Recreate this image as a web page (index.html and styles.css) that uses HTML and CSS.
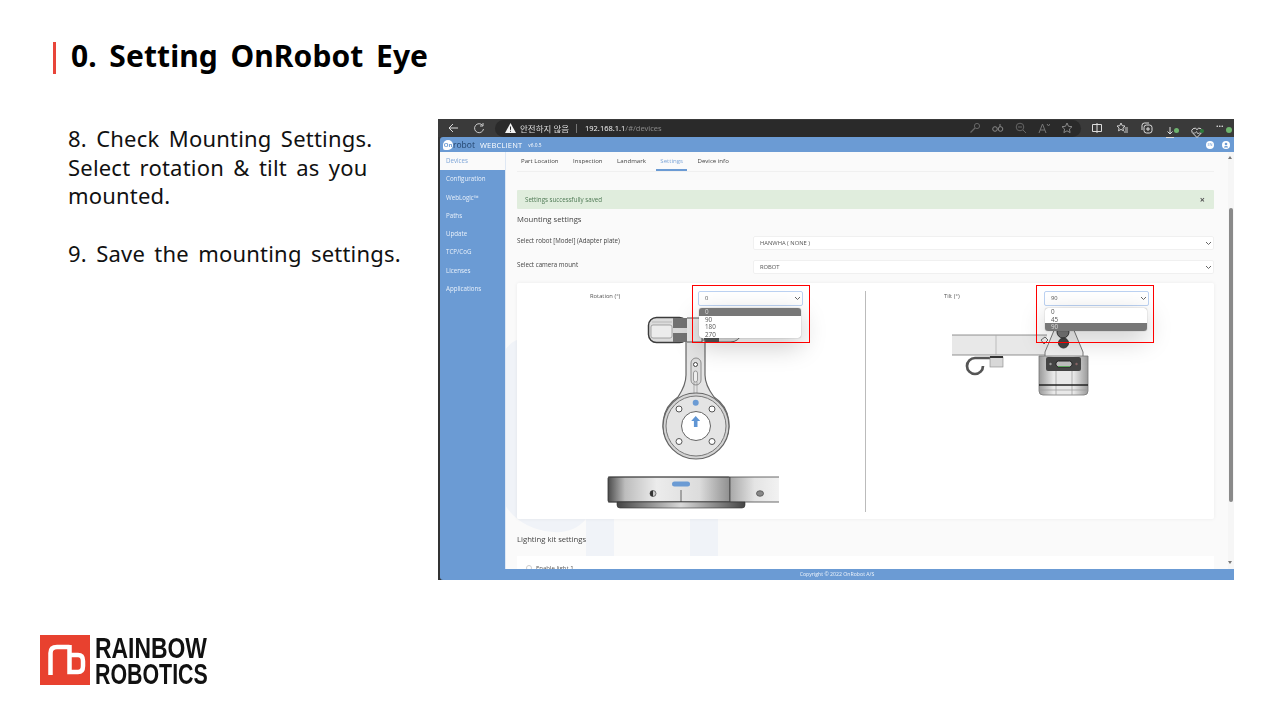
FILE: index.html
```html
<!DOCTYPE html>
<html lang="en">

<head>
  <meta charset="UTF-8">
  <title>0. Setting OnRobot Eye</title>
  <link rel="stylesheet" href="styles.css">
</head>

<body>
  <div class="slide">
    <h1 class="title">0. Setting OnRobot Eye</h1>

    <div class="content">
      <div class="steps">
        <p class="line">8. Check Mounting Settings.</p>
        <p class="line">Select rotation &amp; tilt as you</p>
        <p class="line">mounted.</p>
        <p class="line gap">9. Save the mounting settings.</p>
      </div>

      <div class="capture">
        <div class="shot">
          <div class="toolbar">
            <div class="nav">
              <svg width="12" height="12" viewBox="0 0 12 12"><path d="M11 6H2M6 2L2 6l4 4" fill="none" stroke="#ddd" stroke-width="1"/></svg>
              <svg width="12" height="12" viewBox="0 0 12 12"><path d="M9.6 3.4A4.5 4.5 0 1 0 10.5 7M10 1v3H7" fill="none" stroke="#ccc" stroke-width="1"/></svg>
            </div>
            <div class="address">
              <svg class="warn" width="11" height="10" viewBox="0 0 11 10"><path d="M5.5 0L11 10H0z" fill="#f2f2f2"/><path d="M5.5 3.5v3.4M5.5 7.8v1" stroke="#2b2b2b"/></svg>
              <span class="warn-text">안전하지 않음</span>
              <span class="sep"></span>
              <span class="url">192.168.1.1<span class="url-path">/#/devices</span></span>
              <div class="page-tools">
                <svg width="12" height="12" viewBox="0 0 12 12"><circle cx="8" cy="4" r="2.6" fill="none" stroke="#666"/><path d="M6 6L1.5 10.5" stroke="#666" stroke-width="1.3"/></svg>
                <svg width="12" height="12" viewBox="0 0 12 12"><circle cx="3" cy="7" r="2.3" fill="none" stroke="#888"/><circle cx="8.5" cy="7" r="2.3" fill="none" stroke="#888"/><path d="M8 2v3" stroke="#888"/></svg>
                <svg width="12" height="12" viewBox="0 0 12 12"><circle cx="5" cy="5" r="3.8" fill="none" stroke="#666"/><path d="M8 8l3 3M3 5h4" stroke="#666"/></svg>
                <svg width="12" height="12" viewBox="0 0 12 12"><path d="M1 11L4.5 2 8 11M2.3 8h4.5M9 2l1.5 2L12 2" fill="none" stroke="#777"/></svg>
                <svg width="12" height="12" viewBox="0 0 12 12"><path d="M6 1l1.500 3.300 3.500.4-2.600 2.400.7 3.500L6 8.800l-3.100 1.800.7-3.500L1 4.700l3.500-.4z" fill="none" stroke="#888"/></svg>
              </div>
            </div>
            <div class="tools">
              <svg width="12" height="12" viewBox="0 0 12 12"><path d="M1.5 2.5h9v7h-9zM6 1v10" fill="none" stroke="#ddd"/></svg>
              <svg width="12" height="12" viewBox="0 0 12 12"><path d="M5 1l1.200 2.700 2.800.3-2.100 2 .6 2.800L5 7.400 2.500 8.800l.6-2.800L1 4l2.800-.3zM8.500 6H12M9 8h3M8 10h4" fill="none" stroke="#ddd" stroke-width=".9"/></svg>
              <svg width="12" height="12" viewBox="0 0 12 12"><rect x="3" y="3" width="8" height="8" rx="2.5" fill="none" stroke="#ddd"/><path d="M1 8V3.5A2.5 2.5 0 0 1 3.5 1H8M7 5v4M5 7h4" fill="none" stroke="#ddd"/></svg>
              <span class="tool-badge">
                <svg width="12" height="12" viewBox="0 0 12 12"><path d="M4 0v7M1.5 4.500L4 7l2.500-2.500M0 10.500h8" fill="none" stroke="#ddd"/></svg>
                <i class="dot"></i>
              </span>
              <span class="tool-badge">
                <svg width="12" height="12" viewBox="0 0 12 12"><path d="M6 10.5L1.2 5.5A2.800 2.800 0 0 1 6 2.600a2.800 2.800 0 0 1 4.800 2.900z" fill="none" stroke="#ddd"/><path d="M2 6h2.500l1-1.500L7 7l.8-1H10" fill="none" stroke="#ddd" stroke-width=".7"/></svg>
                <i class="dot dot-dark"></i>
              </span>
              <span class="tool-badge">
                <span class="more">···</span>
                <i class="dot dot-big"></i>
              </span>
            </div>
          </div>

          <div class="app">
            <header class="app-head">
              <span class="brand-mark">On</span>
              <span class="brand">robot</span>
              <span class="brand-name">WEBCLIENT</span>
              <span class="brand-ver">v6.0.5</span>
              <span class="head-icons">
                <i class="head-icon">EN</i>
                <svg width="8" height="8" viewBox="0 0 8 8"><circle cx="4" cy="4" r="4" fill="#fff"/><circle cx="4" cy="3" r="1.3" fill="#6b9bd4"/><path d="M1.8 6.5a2.300 2 0 0 1 4.400 0z" fill="#6b9bd4"/></svg>
              </span>
            </header>

            <div class="app-body">
              <nav class="side">
                <a class="side-item active">Devices</a>
                <a class="side-item">Configuration</a>
                <a class="side-item">WebLogic™</a>
                <a class="side-item">Paths</a>
                <a class="side-item">Update</a>
                <a class="side-item">TCP/CoG</a>
                <a class="side-item">Licenses</a>
                <a class="side-item">Applications</a>
              </nav>

              <main class="main">
                <svg class="watermark" width="723" height="417" viewBox="505 152 723 417">
                  <path d="M505 350Q511 342 517 340V519H586Q572 536 545 531Q518 526 505 505z" fill="#f0f3f8"/>
                  <rect x="586" y="519" width="28" height="50" fill="#f0f3f8"/>
                  <rect x="690" y="519" width="28" height="50" fill="#f0f3f8"/>
                </svg>

                <div class="tabs">
                  <a class="tab">Part Location</a>
                  <a class="tab">Inspection</a>
                  <a class="tab">Landmark</a>
                  <a class="tab current">Settings</a>
                  <a class="tab">Device info</a>
                </div>

                <div class="alert">
                  <span>Settings successfully saved</span>
                  <span class="alert-close">×</span>
                </div>

                <h2 class="section">Mounting settings</h2>

                <div class="field">
                  <label class="field-label">Select robot [Model] (Adapter plate)</label>
                  <div class="select">HANWHA ( NONE )
                    <svg class="chev" width="7" height="5" viewBox="0 0 7 5"><path d="M1 1l2.500 2.500L6 1" fill="none" stroke="#666"/></svg>
                  </div>
                </div>
                <div class="field">
                  <label class="field-label">Select camera mount</label>
                  <div class="select">ROBOT
                    <svg class="chev" width="7" height="5" viewBox="0 0 7 5"><path d="M1 1l2.500 2.500L6 1" fill="none" stroke="#666"/></svg>
                  </div>
                </div>

                <div class="mount-card">
                  <div class="mount-col">
                    <div class="mount-head">
                      <span class="mount-label rotation">Rotation (°)</span>
                      <div class="select open">0
                        <svg class="chev" width="7" height="5" viewBox="0 0 7 5"><path d="M1 1l2.500 2.500L6 1" fill="none" stroke="#666"/></svg>
                      </div>
                      <ul class="options">
                        <li class="selected">0</li>
                        <li>90</li>
                        <li>180</li>
                        <li>270</li>
                      </ul>
                    </div>
                    <svg class="drawing" width="349" height="209" viewBox="517 310 349 209">
                      <defs>
                        <linearGradient id="flange" x1="0" x2="1" y1="0" y2="0">
                          <stop offset="0" stop-color="#4c4c4c"/>
                          <stop offset=".14" stop-color="#bdbdbd"/>
                          <stop offset=".4" stop-color="#ececec"/>
                          <stop offset=".75" stop-color="#dcdcdc"/>
                          <stop offset="1" stop-color="#8f8f8f"/>
                        </linearGradient>
                        <linearGradient id="flange2" x1="0" x2="1" y1="0" y2="0">
                          <stop offset="0" stop-color="#a8a8a8"/>
                          <stop offset=".5" stop-color="#e4e4e4"/>
                          <stop offset="1" stop-color="#f2f2f2"/>
                        </linearGradient>
                        <linearGradient id="lip" x1="0" x2="1" y1="0" y2="0">
                          <stop offset="0" stop-color="#444"/>
                          <stop offset=".5" stop-color="#d8d8d8"/>
                          <stop offset="1" stop-color="#444"/>
                        </linearGradient>
                      </defs>
                      <path d="M700 317h36a8 8 0 0 1 6 16q-3 9-12 9h-40z" fill="#e6e6e6" stroke="#666"/>
                      <rect x="704" y="337" width="15" height="6" fill="#555"/>
                      <path d="M686 340V375Q686 385 678 397A33 33 0 1 0 714 397Q705 385 705 375V340z" fill="#e4e4e4" stroke="#666" stroke-width="1.2"/>
                      <rect x="648.5" y="317.5" width="39" height="25" rx="8" fill="#dcdcdc" stroke="#3c3c3c" stroke-width="1.5"/>
                      <rect x="651" y="325" width="21" height="13" rx="2" fill="#ececec" stroke="#888" stroke-width=".7"/>
                      <path d="M652 322h20" stroke="#aaa" stroke-width=".7"/>
                      <rect x="673" y="318" width="14" height="24" fill="#727272"/>
                      <rect x="673" y="328" width="14" height="5" fill="#dadada"/>
                      <path d="M687 318h15v24h-15" fill="#e8e8e8" stroke="#555"/>
                      <rect x="691" y="358" width="10" height="27" rx="5" fill="#ddd" stroke="#777" stroke-width=".8"/>
                      <circle cx="695.5" cy="364.5" r="2" fill="#fff" stroke="#444"/>
                      <rect x="693.5" y="371" width="4" height="11" rx="2" fill="#eee" stroke="#777" stroke-width=".7"/>
                      <path d="M694 382v12M697 382v12" stroke="#888" stroke-width=".6"/>
                      <circle cx="696" cy="426" r="33" fill="#d4d4d4" stroke="#666" stroke-width="1.2"/>
                      <circle cx="696" cy="426" r="30" fill="#e4e4e4" stroke="#777"/>
                      <circle cx="696" cy="426" r="14.5" fill="#fff" stroke="#666"/>
                      <circle cx="679" cy="409" r="3" fill="#fff" stroke="#555"/>
                      <circle cx="712" cy="409" r="3" fill="#fff" stroke="#555"/>
                      <circle cx="679" cy="441.5" r="3" fill="#fff" stroke="#555"/>
                      <circle cx="712" cy="441.5" r="3" fill="#fff" stroke="#555"/>
                      <circle cx="695.7" cy="402.8" r="3" fill="#6b9bd4"/>
                      <path d="M695.7 416l4.500 5h-2.700v6h-3.600v-6h-2.700z" fill="#5f95d4"/>
                      <rect x="608" y="477" width="122" height="25" rx="1.5" fill="url(#flange)" stroke="#333" stroke-width=".8"/>
                      <rect x="730" y="477" width="49" height="25" fill="url(#flange2)"/>
                      <path d="M730 477v25M681 490v12M608 477H779M608 502H779" stroke="#444" stroke-width=".8"/>
                      <path d="M617 502h128v3q0 3-3 3H620q-3 0-3-3z" fill="url(#lip)" stroke="#333" stroke-width=".6"/>
                      <rect x="672" y="481.5" width="18" height="5" rx="2.5" fill="#6b9bd4"/>
                      <circle cx="653" cy="493.5" r="3" fill="#ccc" stroke="#333" stroke-width=".6"/>
                      <path d="M653 490.5a3 3 0 0 0 0 6z" fill="#333"/>
                      <ellipse cx="760" cy="493.5" rx="3.5" ry="2.8" fill="#888" stroke="#444" stroke-width=".7"/>
                    </svg>
                  </div>

                  <div class="mount-col tilt-col">
                    <div class="mount-head">
                      <span class="mount-label tilt">Tilt (°)</span>
                      <div class="select open">90
                        <svg class="chev" width="7" height="5" viewBox="0 0 7 5"><path d="M1 1l2.500 2.500L6 1" fill="none" stroke="#666"/></svg>
                      </div>
                      <ul class="options">
                        <li>0</li>
                        <li>45</li>
                        <li class="selected">90</li>
                      </ul>
                    </div>
                    <svg class="drawing" width="348" height="100" viewBox="866 310 348 100">
                      <defs>
                        <linearGradient id="body" x1="0" x2="1" y1="0" y2="0">
                          <stop offset="0" stop-color="#9a9a9a"/>
                          <stop offset=".3" stop-color="#e9e9e9"/>
                          <stop offset=".7" stop-color="#e9e9e9"/>
                          <stop offset="1" stop-color="#9a9a9a"/>
                        </linearGradient>
                      </defs>
                      <rect x="952" y="335" width="95" height="20" fill="#e8e8e8"/>
                      <path d="M952 335h95M952 355h95" stroke="#777" stroke-width=".8"/>
                      <path d="M996 335v20" stroke="#aaa" stroke-width=".7"/>
                      <path d="M992 358H975A8 8 0 1 0 983 366" fill="none" stroke="#555" stroke-width="2.7"/>
                      <rect x="990" y="357" width="13" height="10" fill="#d8d8d8" stroke="#888" stroke-width=".6"/>
                      <path d="M990 357h13" stroke="#333" stroke-width="2.2"/>
                      <path d="M1055 328L1045 352V358H1083V352L1073 328z" fill="#eee" stroke="#777"/>
                      <path d="M1041 340l4-3 3 3-4 4z" fill="#eee" stroke="#444" stroke-width=".8"/>
                      <circle cx="1063" cy="332" r="6" fill="#777" stroke="#333"/>
                      <circle cx="1063.5" cy="343" r="5" fill="#444" stroke="#333"/>
                      <path d="M1039 356h49v35q0 4-4 4h-41q-4 0-4-4z" fill="url(#body)" stroke="#777" stroke-width=".8"/>
                      <rect x="1046" y="357" width="35" height="14" rx="2" fill="#444"/>
                      <rect x="1056" y="361" width="16" height="6" rx="2.5" fill="#bbb" stroke="#222"/>
                      <path d="M1058 366.5h12" stroke="#5aa55a" stroke-width="1"/>
                      <circle cx="1050.5" cy="364" r="1.2" fill="#999"/>
                      <circle cx="1076.5" cy="364" r="1.2" fill="#866"/>
                      <path d="M1056 371v24M1072 371v24" stroke="#999" stroke-width=".7"/>
                      <path d="M1039 385h49" stroke="#222" stroke-width="1.4"/>
                      <path d="M1039 390h49" stroke="#999" stroke-width=".7"/>
                    </svg>
                  </div>
                </div>

                <h2 class="section lighting">Lighting kit settings</h2>

                <div class="light-card">
                  <i class="radio"></i>
                  <span>Enable light 1</span>
                </div>
              </main>

              <div class="scrollbar">
                <i class="arrow up"></i>
                <i class="thumb"></i>
                <i class="arrow down"></i>
              </div>
            </div>

            <footer class="app-foot">Copyright © 2022 OnRobot A/S</footer>
          </div>
        </div>

        <div class="mark mark-left"></div>
        <div class="mark mark-right"></div>
      </div>
    </div>

    <div class="logo">
      <svg width="50" height="50" viewBox="0 0 50 50">
        <rect width="50" height="50" fill="#e8412f"/>
        <path d="M10.5 40V18Q10.5 12 17 12H29.5M29.500 10V37H38Q43 37 43 31V26Q43 20 38 20H29.5" fill="none" stroke="#fff" stroke-width="4.5"/>
      </svg>
      <div class="logo-text">
        <span class="logo-top">RAINBOW</span>
        <span class="logo-bottom">ROBOTICS</span>
      </div>
    </div>
  </div>
</body>

</html>
```

FILE: styles.css
```css
* {
  box-sizing: border-box;
}

body {
  margin: 0;
  background: #fff;
  font-family: "Noto Sans", "Noto Sans CJK KR", sans-serif;
  color: #000;
}

.slide {
  width: 1280px;
  height: 720px;
  padding-top: 42px;
  overflow: hidden;
}

/* Title */
.title {
  margin: 0 0 0 53px;
  height: 32px;
  padding-left: 15px;
  border-left: 3px solid #e8453a;
  font-size: 30px;
  line-height: 27px;
  font-weight: 700;
  letter-spacing: 0.1px;
  word-spacing: 4.6px;
}

.content {
  display: flex;
  margin-top: 45px;
  padding-left: 68px;
}

.steps {
  width: 370px;
  padding-top: 5px;
  flex: none;
}

.line {
  margin: 0;
  font-size: 22px;
  line-height: 28.6px;
  letter-spacing: 0.2px;
  word-spacing: 3.4px;
  color: #111;
  white-space: nowrap;
}

.gap {
  margin-top: 29px;
}

/* Screenshot */
.capture {
  position: relative;
  width: 796px;
  height: 461px;
  flex: none;
}

.shot {
  width: 100%;
  height: 100%;
  background: #333;
  filter: blur(0.35px);
  display: flex;
  flex-direction: column;
  overflow: hidden;
}

.mark {
  position: absolute;
  border: 1px solid #f00;
  width: 118px;
  height: 58px;
  top: 166px;
}

.mark-left {
  left: 254px;
}

.mark-right {
  left: 598px;
}

.toolbar {
  height: 18px;
  flex: none;
  display: flex;
  align-items: center;
  background: #3a3a3a;
}

.nav {
  width: 57px;
  padding-left: 9px;
  display: flex;
  gap: 14px;
  flex: none;
}

.address {
  width: 586px;
  height: 17px;
  flex: none;
  background: #2a2a2a;
  border-radius: 9px;
  display: flex;
  align-items: center;
  padding-left: 10px;
  color: #eee;
  font-size: 8.5px;
}

.warn {
  margin-right: 4px;
}

.warn-text {
  width: 50px;
  white-space: nowrap;
  color: #ddd;
}

.sep {
  width: 1px;
  height: 9px;
  background: #777;
  margin: 0 8px 0 6px;
}

.url {
  font-size: 7.5px;
  color: #eee;
}

.url-path {
  color: #888;
}

.page-tools {
  margin-left: auto;
  display: flex;
  gap: 11px;
  padding-right: 8px;
}

.tools {
  flex: 1;
  display: flex;
  gap: 13px;
  padding-left: 10px;
}

.tool-badge {
  position: relative;
  width: 12px;
  height: 12px;
  display: block;
}

.more {
  display: block;
  color: #ddd;
  font-size: 9px;
  line-height: 8px;
  font-weight: 700;
}

.dot {
  position: absolute;
  right: -1px;
  bottom: 1px;
  width: 5px;
  height: 5px;
  border-radius: 50%;
  background: #6fb56f;
}

.dot-dark {
  background: #2d7a3a;
  width: 4px;
  height: 4px;
}

.dot-big {
  width: 6px;
  height: 6px;
  right: -4px;
}

/* Web client */
.app {
  flex: 1;
  margin-left: 2px;
  display: flex;
  flex-direction: column;
  background: #6b9bd4;
  border-radius: 3px 0 0 3px;
  overflow: hidden;
  font-family: "Open Sans", sans-serif;
  min-height: 0;
}

.app-head {
  height: 15px;
  flex: none;
  display: flex;
  align-items: center;
  padding-left: 3px;
  color: #fff;
}

.brand-mark {
  width: 10px;
  height: 10px;
  border-radius: 50% 50% 50% 20%;
  background: #fff;
  color: #6b9bd4;
  font-size: 6px;
  line-height: 10px;
  text-align: center;
  font-weight: 700;
}

.brand {
  font-size: 8.5px;
  color: #24456e;
  margin-right: 5px;
}

.brand-name {
  font-size: 7.5px;
  letter-spacing: 0.2px;
  margin-right: 6px;
}

.brand-ver {
  font-size: 4.8px;
}

.head-icons {
  margin-left: auto;
  display: flex;
  align-items: center;
  gap: 8px;
  padding-right: 4px;
}

.head-icon {
  width: 8px;
  height: 8px;
  border-radius: 50%;
  background: #fff;
  color: #6b9bd4;
  font-size: 4px;
  line-height: 8px;
  text-align: center;
  font-style: normal;
}

.app-body {
  flex: 1;
  display: flex;
  min-height: 0;
}

.side {
  width: 65px;
  flex: none;
  display: flex;
  flex-direction: column;
}

.side-item {
  height: 18.3px;
  padding-left: 6px;
  line-height: 18.3px;
  font-size: 6.2px;
  color: #e8f0fa;
}

.side-item.active {
  background: #fafafa;
  color: #7ea6d8;
}

.main {
  flex: 1;
  position: relative;
  padding: 0 14px 0 12px;
  background: #fafafa;
  border-left: 1px solid #dfe8f4;
  overflow: hidden;
  color: #555;
}

.watermark {
  position: absolute;
  left: -1px;
  top: 0;
}

.tabs {
  position: relative;
  display: flex;
  height: 20px;
  margin-left: -1px;
  gap: 6.5px;
  border-bottom: 1px solid #f0f0f0;
}

.tab {
  padding: 0 4px;
  line-height: 18px;
  font-size: 6.1px;
  color: #444;
}

.tab.current {
  color: #7ea6d8;
  border-bottom: 2px solid #6b9bd4;
}

.alert {
  position: relative;
  margin: 18px 0 0 -1px;
  height: 19px;
  padding: 0 8px;
  display: flex;
  align-items: center;
  justify-content: space-between;
  background: #e0eddd;
  border-radius: 1px;
  font-size: 6.2px;
  color: #4f7a55;
}

.alert-close {
  color: #555;
  font-size: 9px;
  font-weight: 700;
  margin-right: 1px;
}

.section {
  position: relative;
  margin: 4px 0 0 -1px;
  height: 12px;
  line-height: 12px;
  font-size: 7.7px;
  font-weight: 400;
  color: #444;
}

.section.lighting {
  margin-top: 14px;
}

.field {
  position: relative;
  display: grid;
  grid-template-columns: 236px 1fr;
  margin: 10px 0 0 -1px;
}

.section + .field {
  margin-top: 11px;
}

.field-label {
  font-size: 6.2px;
  line-height: 10px;
  color: #444;
}

.select {
  position: relative;
  height: 14px;
  padding-left: 6px;
  background: #fff;
  border: 1px solid #f0f0f0;
  border-radius: 2px;
  font-size: 5.8px;
  line-height: 12px;
  color: #555;
}

.chev {
  position: absolute;
  right: 1px;
  top: 4px;
}

.mount-card {
  position: relative;
  margin: 9px 0 0 -1px;
  height: 236px;
  display: grid;
  grid-template-columns: 349px 1fr;
  background: #fff;
  border-radius: 2px;
  box-shadow: 0 0 4px rgba(0, 0, 0, 0.06);
}

.tilt-col {
  position: relative;
}

.tilt-col::before {
  content: "";
  position: absolute;
  left: -1px;
  top: 8px;
  bottom: 7px;
  width: 1px;
  background: #bbb;
}

.mount-head {
  position: relative;
  height: 27px;
  padding-top: 8px;
}

.mount-label {
  position: absolute;
  top: 9px;
  font-size: 5.8px;
  color: #555;
}

.rotation {
  left: 73px;
}

.tilt {
  left: 78px;
}

.select.open {
  width: 105px;
  height: 15px;
  margin-left: 181px;
  border: 1px solid #bcd2f2;
  line-height: 13px;
}

.tilt-col .select.open {
  margin-left: 178px;
}

.options {
  position: absolute;
  z-index: 2;
  left: 182px;
  top: 25px;
  width: 102px;
  margin: 0;
  padding: 0;
  list-style: none;
  background: #fff;
  border-radius: 3px;
  overflow: hidden;
  box-shadow: 0 8px 26px rgba(0, 0, 0, 0.22), 0 0 1px rgba(0, 0, 0, 0.5);
  font-size: 6.3px;
  line-height: 7.6px;
  color: #555;
}

.tilt-col .options {
  left: 179px;
}

.options li {
  padding-left: 6px;
  height: 7.6px;
}

.options .selected {
  background: #777;
  color: #ddd;
}

.drawing {
  display: block;
}

.light-card {
  position: relative;
  margin: 11px 0 0 -1px;
  height: 40px;
  padding: 8px 0 0 9px;
  display: flex;
  gap: 4px;
  background: #fff;
  font-size: 6px;
  color: #555;
}

.radio {
  width: 6px;
  height: 6px;
  margin-top: 1px;
  border: 1px solid #ccc;
  border-radius: 50%;
}

.scrollbar {
  width: 6px;
  flex: none;
  position: relative;
  background: #f6f6f6;
}

.thumb {
  position: absolute;
  left: 0.5px;
  top: 56px;
  width: 4px;
  height: 294px;
  border-radius: 2px;
  background: #8a8a8a;
}

.arrow {
  position: absolute;
  left: 0;
  border-left: 2.5px solid transparent;
  border-right: 2.5px solid transparent;
}

.arrow.up {
  top: 4px;
  border-bottom: 3px solid #777;
}

.arrow.down {
  bottom: 5px;
  border-top: 3px solid #777;
}

.app-foot {
  height: 11px;
  flex: none;
  text-align: center;
  font-size: 5.2px;
  line-height: 11px;
  color: #eef4fb;
}

/* Logo */
.logo {
  display: flex;
  margin: 55px 0 0 40px;
  gap: 5px;
}

.logo-text {
  display: flex;
  flex-direction: column;
  align-items: flex-start;
  font-family: "Liberation Sans", sans-serif;
  font-weight: 700;
  font-size: 29px;
  line-height: 26px;
  color: #111;
}

.logo-top,
.logo-bottom {
  transform-origin: left center;
}

.logo-top {
  transform: scaleX(0.79);
}

.logo-bottom {
  transform: scaleX(0.737);
}
```
